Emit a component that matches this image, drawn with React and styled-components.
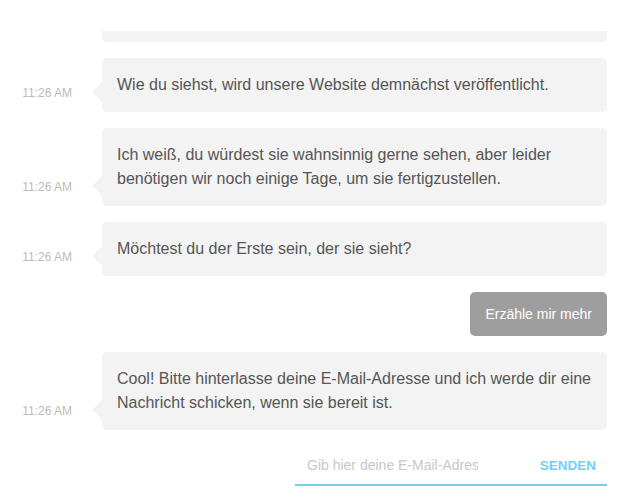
import styled, { createGlobalStyle } from 'styled-components';

const GlobalStyle = createGlobalStyle`
  html, body {
    margin: 0;
    padding: 0;
    background: #fff;
    font-family: "Liberation Sans", Arial, sans-serif;
  }
`;

const Page = styled.div`
  height: 499px;
  padding-top: 31px;
  box-sizing: border-box;
  display: flex;
  flex-direction: column;
`;

const Chat = styled.div`
  flex: 1;
  min-height: 0;
  overflow: hidden;
  display: flex;
  flex-direction: column;
  justify-content: flex-end;
  padding: 0 33px 13px 0;
`;

const Row = styled.div`
  display: flex;
  align-items: flex-end;
  justify-content: ${(p) => (p.$mine ? 'flex-end' : 'flex-start')};
  margin-bottom: 16px;
  flex-shrink: 0;
`;

const Time = styled.div`
  width: 72px;
  margin-right: 30px;
  margin-bottom: 12px;
  text-align: right;
  font-size: 12px;
  line-height: 14px;
  color: #bbbbbb;
  flex-shrink: 0;
`;

const Bubble = styled.div`
  position: relative;
  flex: 1;
  background: #f3f3f3;
  border-radius: 5px;
  padding: 15px;
  font-size: 16px;
  line-height: 24px;
  color: #555;

  &::before {
    content: '';
    position: absolute;
    left: -10px;
    bottom: 10px;
    border-style: solid;
    border-width: 10px 10px 10px 0;
    border-color: transparent #f3f3f3 transparent transparent;
  }
`;

const Reply = styled.div`
  background: #9e9e9e;
  color: #fff;
  border-radius: 5px;
  padding: 10px 15px;
  font-size: 14px;
  line-height: 24px;
`;

const Form = styled.form`
  display: flex;
  align-items: center;
  align-self: flex-end;
  width: 312px;
  height: 40px;
  border-bottom: 2px solid #72cff4;
  box-sizing: border-box;
  flex-shrink: 0;
`;

const EmailInput = styled.input`
  flex: 1;
  min-width: 0;
  border: none;
  outline: none;
  background: transparent;
  padding: 0 0 0 12px;
  font-family: "Liberation Sans", Arial, sans-serif;
  font-size: 14px;
  color: #555;
  caret-color: #333;

  &::placeholder {
    color: #c8c8c8;
  }
`;

const Send = styled.button`
  border: none;
  background: transparent;
  padding: 0 11px 0 62px;
  font-family: "Liberation Sans", Arial, sans-serif;
  font-size: 13.5px;
  font-weight: bold;
  color: #72cff4;
  cursor: pointer;
`;

const messages = [
  { time: '11:26 AM', text: 'Das ist eine ältere Nachricht, die bereits weiter oben im Verlauf steht und nicht mehr ganz zu sehen ist.' },
  { time: '11:26 AM', text: 'Wie du siehst, wird unsere Website demnächst veröffentlicht.' },
  { time: '11:26 AM', text: 'Ich weiß, du würdest sie wahnsinnig gerne sehen, aber leider benötigen wir noch einige Tage, um sie fertigzustellen.' },
  { time: '11:26 AM', text: 'Möchtest du der Erste sein, der sie sieht?' },
  { mine: true, text: 'Erzähle mir mehr' },
  { time: '11:26 AM', text: 'Cool! Bitte hinterlasse deine E-Mail-Adresse und ich werde dir eine Nachricht schicken, wenn sie bereit ist.' },
];

export default function App() {
  return (
    <>
      <GlobalStyle />
      <Page>
        <Chat>
          {messages.map((m, i) =>
            m.mine ? (
              <Row key={i} $mine>
                <Reply>{m.text}</Reply>
              </Row>
            ) : (
              <Row key={i}>
                <Time>{m.time}</Time>
                <Bubble>{m.text}</Bubble>
              </Row>
            )
          )}
          <Form onSubmit={(e) => e.preventDefault()}>
            <EmailInput type="email" placeholder="Gib hier deine E-Mail-Adresse ein" autoFocus />
            <Send type="submit">SENDEN</Send>
          </Form>
        </Chat>
      </Page>
    </>
  );
}
